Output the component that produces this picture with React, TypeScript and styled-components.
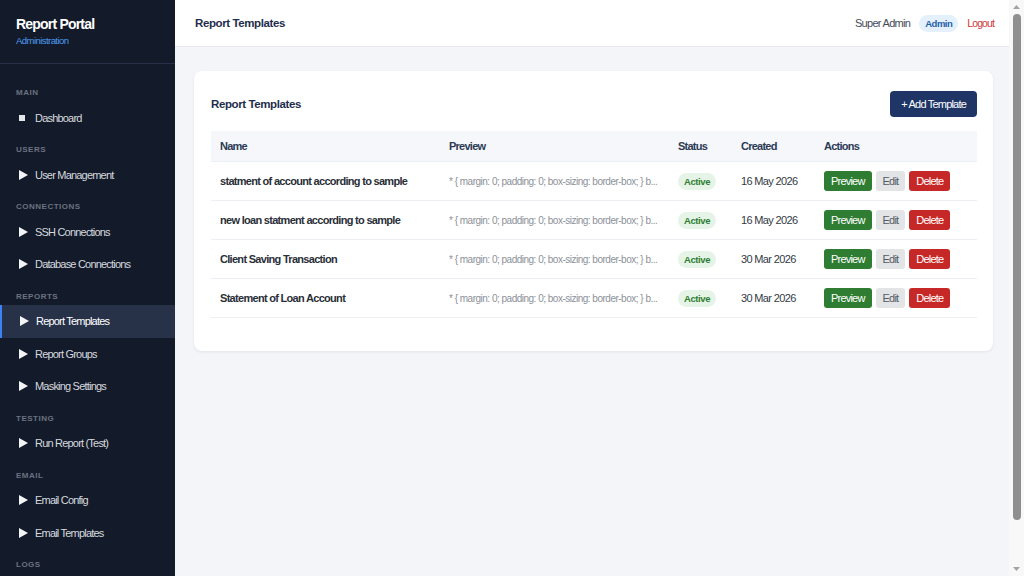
import React from "react";
import styled, { createGlobalStyle } from "styled-components";

const GlobalStyle = createGlobalStyle`
  * { box-sizing: border-box; }
  body {
    margin: 0;
    background: #f4f5f9;
    font-family: "Liberation Sans", Arial, sans-serif;
    color: #222;
  }
`;

interface NavItem {
  label: string;
  icon?: "square" | "play";
  active?: boolean;
}

interface NavSection {
  title: string;
  items: NavItem[];
}

const sections: NavSection[] = [
  { title: "Main", items: [{ label: "Dashboard", icon: "square" }] },
  { title: "Users", items: [{ label: "User Management" }] },
  {
    title: "Connections",
    items: [{ label: "SSH Connections" }, { label: "Database Connections" }],
  },
  {
    title: "Reports",
    items: [
      { label: "Report Templates", active: true },
      { label: "Report Groups" },
      { label: "Masking Settings" },
    ],
  },
  { title: "Testing", items: [{ label: "Run Report (Test)" }] },
  {
    title: "Email",
    items: [{ label: "Email Config" }, { label: "Email Templates" }],
  },
  { title: "Logs", items: [{ label: "Execution Logs" }] },
];

interface Template {
  name: string;
  created: string;
}

const templates: Template[] = [
  { name: "statment of account according to sample", created: "16 May 2026" },
  { name: "new loan statment according to sample", created: "16 May 2026" },
  { name: "Client Saving Transaction", created: "30 Mar 2026" },
  { name: "Statement of Loan Account", created: "30 Mar 2026" },
];

const previewText = "* { margin: 0; padding: 0; box-sizing: border-box; } b...";

export default function App() {
  return (
    <>
      <GlobalStyle />
      <Layout>
        <Sidebar>
          <Brand>
            <BrandTitle>Report Portal</BrandTitle>
            <BrandSub>Administration</BrandSub>
          </Brand>
          <Nav>
            {sections.map((section) => (
              <div key={section.title}>
                <SectionLabel>{section.title}</SectionLabel>
                {section.items.map((item) => (
                  <NavLink key={item.label} $active={item.active}>
                    <NavIcon>
                      {item.icon === "square" ? (
                        <svg width="6" height="6" viewBox="0 0 6 6">
                          <rect width="6" height="6" fill="#e5e7eb" />
                        </svg>
                      ) : (
                        <svg width="9" height="10" viewBox="0 0 9 10">
                          <path d="M0 0 L9 5 L0 10 Z" fill="#f3f4f6" />
                        </svg>
                      )}
                    </NavIcon>
                    {item.label}
                  </NavLink>
                ))}
              </div>
            ))}
          </Nav>
        </Sidebar>

        <Main>
          <TopBar>
            <PageTitle>Report Templates</PageTitle>
            <UserBox>
              <UserName>Super Admin</UserName>
              <RoleBadge>Admin</RoleBadge>
              <LogoutLink>Logout</LogoutLink>
            </UserBox>
          </TopBar>

          <Content>
            <Card>
              <CardHeader>
                <CardTitle>Report Templates</CardTitle>
                <PrimaryButton>+ Add Template</PrimaryButton>
              </CardHeader>

              <div>
                <HeadRow>
                  <HeadCell>Name</HeadCell>
                  <HeadCell>Preview</HeadCell>
                  <HeadCell>Status</HeadCell>
                  <HeadCell>Created</HeadCell>
                  <HeadCell>Actions</HeadCell>
                </HeadRow>
                {templates.map((t) => (
                  <BodyRow key={t.name}>
                    <NameCell>{t.name}</NameCell>
                    <PreviewCell>{previewText}</PreviewCell>
                    <Cell>
                      <StatusBadge>Active</StatusBadge>
                    </Cell>
                    <DateCell>{t.created}</DateCell>
                    <Actions>
                      <SmallButton $variant="preview">Preview</SmallButton>
                      <SmallButton $variant="edit">Edit</SmallButton>
                      <SmallButton $variant="delete">Delete</SmallButton>
                    </Actions>
                  </BodyRow>
                ))}
              </div>
            </Card>
          </Content>
        </Main>
      </Layout>

      <ScrollTrack>
        <ScrollArrow>
          <svg width="7" height="4" viewBox="0 0 7 4">
            <path d="M0 4 L3.5 0 L7 4 Z" fill="#a3a3a3" />
          </svg>
        </ScrollArrow>
        <ScrollRail>
          <ScrollThumb />
        </ScrollRail>
        <ScrollArrow>
          <svg width="7" height="4" viewBox="0 0 7 4">
            <path d="M0 0 L3.5 4 L7 0 Z" fill="#a3a3a3" />
          </svg>
        </ScrollArrow>
      </ScrollTrack>
    </>
  );
}

const Layout = styled.div`
  display: flex;
  min-height: 100vh;
  margin-right: 15px;
`;

const ScrollTrack = styled.div`
  position: fixed;
  top: 0;
  right: 0;
  bottom: 0;
  width: 15px;
  background: #f8f8f8;
  display: flex;
  flex-direction: column;
  align-items: center;
`;

const ScrollArrow = styled.div`
  height: 14px;
  display: flex;
  align-items: center;
  justify-content: center;
`;

const ScrollRail = styled.div`
  flex: 1;
  width: 100%;
  display: flex;
  justify-content: center;
  padding-bottom: 42px;
`;

const ScrollThumb = styled.div`
  width: 8px;
  height: 100%;
  border-radius: 4px;
  background: #8f8f8f;
`;

const Sidebar = styled.aside`
  width: 175px;
  flex-shrink: 0;
  background: #131a2a;
  color: #d1d5db;
  padding-bottom: 18px;
`;

const Brand = styled.div`
  height: 64px;
  padding: 15px 16px 0;
  border-bottom: 1px solid #263047;
`;

const BrandTitle = styled.div`
  color: #ffffff;
  font-weight: 700;
  font-size: 14px;
  line-height: 18px;
  letter-spacing: -0.8px;
`;

const BrandSub = styled.div`
  color: #4e9cf0;
  font-size: 9.5px;
  line-height: 12px;
  margin-top: 2px;
  letter-spacing: -0.55px;
`;

const Nav = styled.nav`
  padding-top: 13px;
`;

const SectionLabel = styled.div`
  padding: 11px 16px 3.5px;
  font-size: 8px;
  line-height: 10px;
  font-weight: 700;
  letter-spacing: 0.5px;
  text-transform: uppercase;
  color: #6b7280;
`;

const NavLink = styled.div<{ $active?: boolean }>`
  display: flex;
  align-items: center;
  height: 32.5px;
  padding-left: ${(p) => (p.$active ? "18px" : "19px")};
  border-left: ${(p) => (p.$active ? "2px solid #3b82f6" : "none")};
  background: ${(p) => (p.$active ? "#273249" : "transparent")};
  color: ${(p) => (p.$active ? "#ffffff" : "#d6d9df")};
  font-size: 11px;
  letter-spacing: -0.8px;
`;

const NavIcon = styled.span`
  width: 16px;
  display: inline-flex;
  align-items: center;
`;

const Main = styled.main`
  flex: 1;
  min-width: 0;
`;

const TopBar = styled.header`
  height: 47px;
  background: #ffffff;
  border-bottom: 1px solid #e6e8ee;
  display: flex;
  align-items: center;
  justify-content: space-between;
  padding: 0 15px 0 20px;
`;

const PageTitle = styled.h1`
  margin: 0;
  font-size: 11.5px;
  font-weight: 700;
  letter-spacing: -0.4px;
  color: #1f2d4d;
`;

const UserBox = styled.div`
  display: flex;
  align-items: center;
  gap: 9px;
`;

const UserName = styled.span`
  color: #444b57;
  font-size: 11px;
  letter-spacing: -0.7px;
`;

const RoleBadge = styled.span`
  background: #e4f0fc;
  color: #1f5fa8;
  font-weight: 700;
  font-size: 9.5px;
  letter-spacing: -0.5px;
  padding: 3px 6px;
  border-radius: 10px;
`;

const LogoutLink = styled.span`
  color: #d0383a;
  font-size: 10.5px;
  letter-spacing: -0.9px;
`;

const Content = styled.div`
  padding: 24px 16px 24px 19px;
`;

const Card = styled.section`
  background: #ffffff;
  border-radius: 8px;
  box-shadow: 0 1px 3px rgba(20, 30, 60, 0.08);
  padding: 20px 16px 33px 17px;
`;

const CardHeader = styled.div`
  display: flex;
  align-items: center;
  justify-content: space-between;
  margin-bottom: 14px;
`;

const CardTitle = styled.h2`
  margin: 0;
  font-size: 11.5px;
  font-weight: 700;
  letter-spacing: -0.4px;
  color: #1f2d4d;
`;

const PrimaryButton = styled.button`
  height: 26px;
  padding: 0 11px;
  border: none;
  border-radius: 4px;
  background: #1e3566;
  color: #ffffff;
  font-family: inherit;
  font-size: 11px;
  letter-spacing: -0.8px;
`;

const rowColumns = `
  display: grid;
  grid-template-columns: 229px 229px 63px 83px 1fr;
  align-items: center;
  padding-left: 9px;
`;

const HeadRow = styled.div`
  ${rowColumns}
  height: 31px;
  background: #f5f7fa;
  border-bottom: 1px solid #eceff3;
`;

const HeadCell = styled.div`
  font-size: 11px;
  font-weight: 700;
  letter-spacing: -0.75px;
  color: #2c3a55;
`;

const BodyRow = styled.div`
  ${rowColumns}
  height: 39px;
  border-bottom: 1px solid #eceff3;
`;

const Cell = styled.div`
  font-size: 11px;
  letter-spacing: -0.65px;
`;

const NameCell = styled(Cell)`
  font-weight: 700;
  letter-spacing: -0.7px;
  color: #2a2f38;
  white-space: nowrap;
`;

const PreviewCell = styled(Cell)`
  font-size: 10px;
  letter-spacing: -0.5px;
  color: #8c9199;
  white-space: nowrap;
  overflow: hidden;
`;

const DateCell = styled(Cell)`
  color: #333a44;
`;

const StatusBadge = styled.span`
  display: inline-block;
  background: #e5f4e7;
  color: #2e7d32;
  font-weight: 700;
  font-size: 9.5px;
  letter-spacing: -0.4px;
  padding: 3px 6px;
  border-radius: 10px;
`;

const Actions = styled.div`
  display: flex;
  gap: 4px;
`;

const buttonColors = {
  preview: { bg: "#2e7d32", fg: "#ffffff" },
  edit: { bg: "#e3e4e6", fg: "#555b64" },
  delete: { bg: "#c62828", fg: "#ffffff" },
};

const SmallButton = styled.button<{ $variant: keyof typeof buttonColors }>`
  height: 20px;
  padding: 0 7px;
  border: none;
  border-radius: 3px;
  font-family: inherit;
  font-size: 11px;
  letter-spacing: -0.8px;
  background: ${(p) => buttonColors[p.$variant].bg};
  color: ${(p) => buttonColors[p.$variant].fg};
`;
